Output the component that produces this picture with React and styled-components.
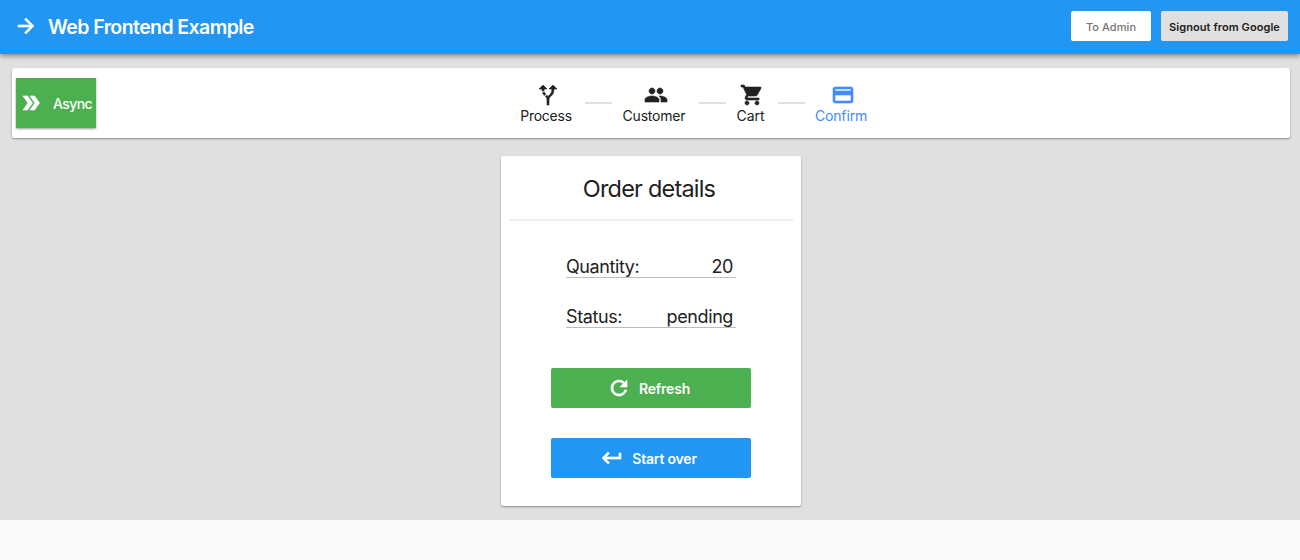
import React from "react";
import styled, { createGlobalStyle } from "styled-components";
import {
  MdArrowForward,
  MdDoubleArrow,
  MdAltRoute,
  MdPeople,
  MdShoppingCart,
  MdPayment,
  MdRefresh,
  MdKeyboardReturn,
} from "react-icons/md";

const GlobalStyle = createGlobalStyle`
  * { box-sizing: border-box; }
  body {
    margin: 0;
    background: #fafafa;
    color: #212121;
    font-family: Inter, "Liberation Sans", sans-serif;
    -webkit-font-smoothing: antialiased;
  }
  button { font-family: inherit; border: 0; padding: 0; cursor: pointer; }
  svg { display: block; flex: none; }
  svg [fill="none"] { stroke: none; }
`;

const Header = styled.header`
  position: relative;
  display: flex;
  align-items: center;
  height: 54px;
  padding: 0 12px 0 14px;
  background: #2196f3;
  color: #fff;
  box-shadow: 0 2px 5px rgba(0, 0, 0, 0.42);
  svg { margin-bottom: 2px; stroke-width: 0.7px; }
`;

const Title = styled.h1`
  flex: 1;
  margin: 0 0 0 10px;
  font-size: 19.5px;
  font-weight: 600;
  line-height: 24px;
  letter-spacing: -0.58px;
`;

const HeaderButton = styled.button`
  width: ${(p) => p.$width}px;
  height: 30px;
  margin: 0 0 2px 10px;
  padding-top: 2px;
  border-radius: 2px;
  background: ${(p) => (p.$muted ? "#e0e0e0" : "#fff")};
  color: ${(p) => (p.$muted ? "#212121" : "#757575")};
  font-size: 11px;
  font-weight: ${(p) => (p.$muted ? 600 : 500)};
  letter-spacing: ${(p) => p.$spacing}px;
  white-space: nowrap;
`;

const Main = styled.main`
  height: 466px;
  padding: 14px 10px 0 12px;
  background: #e0e0e0;
`;

const paperShadow = "0 1px 2px rgba(0, 0, 0, 0.38)";

const Toolbar = styled.nav`
  display: flex;
  height: 70px;
  padding: 10px 4px;
  border-radius: 2px;
  background: #fff;
  box-shadow: ${paperShadow};
`;

const AsyncButton = styled.button`
  display: flex;
  align-items: center;
  width: 80px;
  height: 50px;
  padding-left: 3px;
  background: #4caf50;
  color: #fff;
  font-size: 14px;
  font-weight: 500;
  box-shadow: ${paperShadow};
  svg { margin-bottom: 1px; stroke-width: 0.7px; }
  span { margin: 1px 0 0 10px; letter-spacing: -0.6px; }
`;

const Steps = styled.div`
  display: flex;
  margin-left: 424px;
  padding-top: 5px;
`;

const Step = styled.div`
  display: flex;
  flex-direction: column;
  align-items: center;
  width: ${(p) => p.$width}px;
  color: ${(p) => (p.$active ? "#448aff" : "#212121")};
  font-size: 14px;
  line-height: 18px;
  letter-spacing: ${(p) => p.$spacing}px;
  white-space: nowrap;
  svg { margin: 0 0 0 3px; stroke-width: 0.6px; }
`;

const Connector = styled.div`
  width: 27px;
  height: 2px;
  margin: 19px 10px 0 13px;
  background: #e0e0e0;
`;

const Card = styled.section`
  display: flex;
  flex-direction: column;
  align-items: center;
  width: 300px;
  height: 350px;
  margin: 18px 0 0 489px;
  padding: 0 8px;
  border-radius: 2px;
  background: #fff;
  box-shadow: ${paperShadow};
`;

const CardTitle = styled.h2`
  width: 284px;
  height: 65px;
  margin: 0 0 32px;
  padding: 17px 4px 0 0;
  border-bottom: 2px solid #eee;
  text-align: center;
  font-size: 23.5px;
  font-weight: 400;
  line-height: 32px;
  letter-spacing: -0.8px;
`;

const Field = styled.div`
  display: flex;
  justify-content: space-between;
  width: 170px;
  height: 25px;
  margin-bottom: 25px;
  padding-right: 3px;
  border-bottom: 1px solid #bdbdbd;
  font-size: 18px;
  line-height: 28px;
  letter-spacing: -0.4px;
`;

const ActionButton = styled.button`
  display: flex;
  align-items: center;
  justify-content: center;
  gap: 8px;
  width: 200px;
  height: 40px;
  margin: ${(p) => p.$top}px 0 0;
  padding-right: 5px;
  border-radius: 2px;
  background: ${(p) => p.$color};
  color: #fff;
  font-size: 14px;
  font-weight: 600;
  letter-spacing: ${(p) => p.$spacing}px;
  svg { stroke-width: 0.7px; }
  span { padding-top: 1px; }
`;

const steps = [
  { label: "Process", Icon: MdAltRoute, width: 52, spacing: -0.25 },
  { label: "Customer", Icon: MdPeople, width: 64, spacing: -0.2 },
  { label: "Cart", Icon: MdShoppingCart, width: 29, spacing: -0.1 },
  { label: "Confirm", Icon: MdPayment, width: 52, spacing: -0.15, active: true },
];

export default function App() {
  return (
    <>
      <GlobalStyle />
      <Header>
        <MdArrowForward size={24} />
        <Title>Web Frontend Example</Title>
        <HeaderButton $width={80} $spacing={0.08}>To Admin</HeaderButton>
        <HeaderButton $width={127} $spacing={0.08} $muted>Signout from Google</HeaderButton>
      </Header>
      <Main>
        <Toolbar>
          <AsyncButton>
            <MdDoubleArrow size={24} />
            <span>Async</span>
          </AsyncButton>
          <Steps>
            {steps.map(({ label, Icon, width, spacing, active }, i) => (
              <React.Fragment key={label}>
                {i > 0 && <Connector />}
                <Step $width={width} $spacing={spacing} $active={active}>
                  <Icon size={24} />
                  <span>{label}</span>
                </Step>
              </React.Fragment>
            ))}
          </Steps>
        </Toolbar>
        <Card>
          <CardTitle>Order details</CardTitle>
          <Field><span>Quantity:</span><span>20</span></Field>
          <Field><span>Status:</span><span>pending</span></Field>
          <ActionButton $color="#4caf50" $top={15} $spacing={-0.2}>
            <MdRefresh size={24} />
            <span>Refresh</span>
          </ActionButton>
          <ActionButton $color="#2196f3" $top={30} $spacing={-0.2}>
            <MdKeyboardReturn size={24} />
            <span>Start over</span>
          </ActionButton>
        </Card>
      </Main>
    </>
  );
}
